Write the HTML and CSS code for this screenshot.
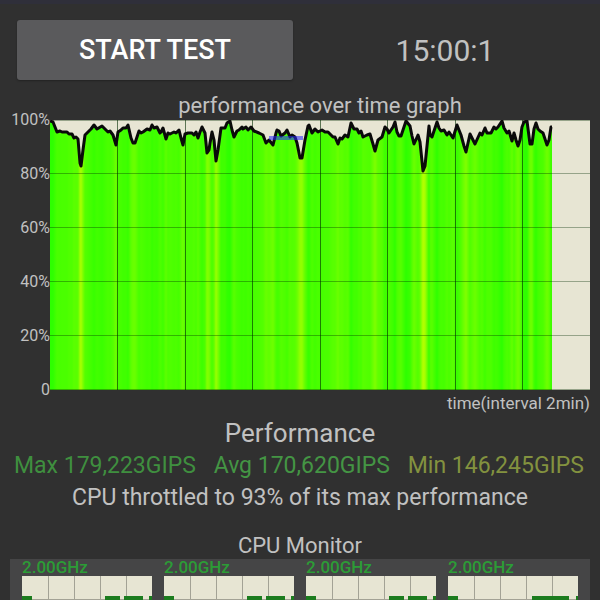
FILE: index.html
```html
<!DOCTYPE html>
<html lang="en">
<head>
    <meta charset="UTF-8">
    <meta name="viewport" content="width=device-width, initial-scale=1">
    <title>CPU Throttling Test</title>
    <link rel="stylesheet" href="styles.css">
</head>
<body>
    <div class="container">
        <div class="top-bar">
            <button type="button" class="start-button">START TEST</button>
            <div class="timer">15:00:1</div>
        </div>

        <div class="graph">
            <div class="graph-title">performance over time graph</div>
            <div class="graph-labels">
                <span>100%</span>
                <span>80%</span>
                <span>60%</span>
                <span>40%</span>
                <span>20%</span>
                <span>0</span>
            </div>
            <svg class="graph-plot" id="performance-graph" viewBox="0 0 540 270" role="img" aria-label="performance over time graph">
                <defs>
                    <linearGradient id="load-colors" gradientUnits="userSpaceOnUse" x1="0" y1="0" x2="502" y2="0"></linearGradient>
                </defs>
                <polygon id="performance-area" fill="url(#load-colors)" />
                <path class="grid-row" d="M0 .5H540M0 53.5H540M0 107.5H540M0 161.5H540M0 215.5H540M0 269.5H540" />
                <path class="grid-column" d="M67.5 0V270M135.5 0V270M202.5 0V270M270.5 0V270M337.5 0V270M405.5 0V270M472.5 0V270" />
                <polyline id="performance-line" class="performance-line" />
                <rect class="marker" x="219" y="16" width="34" height="4" />
            </svg>
            <div class="graph-time">time(interval 2min)</div>
        </div>

        <h2 class="section-title">Performance</h2>
        <div class="stats">
            <span class="stat-max">Max 179,223GIPS</span>
            <span class="stat-avg">Avg 170,620GIPS</span>
            <span class="stat-min">Min 146,245GIPS</span>
        </div>
        <p class="summary">CPU throttled to 93% of its max performance</p>

        <h3 class="monitor-title">CPU Monitor</h3>
        <div class="monitor">
            <div class="core">
                <div class="core-speed">2.00GHz</div>
                <svg class="core-plot" viewBox="0 0 130 24">
                    <path class="core-grid" d="M26.5 0V24M52.5 0V24M78.5 0V24M104.5 0V24M0 23.5H130" />
                    <path class="core-load" d="M0 20H10V24H0zM83 20H98V24H83zM102 20H121V24H102zM127 20H130V24H127z" />
                </svg>
            </div>
            <div class="core">
                <div class="core-speed">2.00GHz</div>
                <svg class="core-plot" viewBox="0 0 130 24">
                    <path class="core-grid" d="M26.5 0V24M52.5 0V24M78.5 0V24M104.5 0V24M0 23.5H130" />
                    <path class="core-load" d="M0 20H10V24H0zM83 20H98V24H83zM102 20H121V24H102zM127 20H130V24H127z" />
                </svg>
            </div>
            <div class="core">
                <div class="core-speed">2.00GHz</div>
                <svg class="core-plot" viewBox="0 0 130 24">
                    <path class="core-grid" d="M26.5 0V24M52.5 0V24M78.5 0V24M104.5 0V24M0 23.5H130" />
                    <path class="core-load" d="M0 20H10V24H0zM83 20H98V24H83zM102 20H121V24H102zM127 20H130V24H127z" />
                </svg>
            </div>
            <div class="core">
                <div class="core-speed">2.00GHz</div>
                <svg class="core-plot" viewBox="0 0 130 24">
                    <path class="core-grid" d="M26.5 0V24M52.5 0V24M78.5 0V24M104.5 0V24M0 23.5H130" />
                    <path class="core-load" d="M0 20H10V24H0zM84 20H121V24H84zM128 20H130V24H128z" />
                </svg>
            </div>
        </div>
    </div>
    <script src="graph.js"></script>
</body>
</html>
```
FILE: styles.css
```css
body {
    font-family: Roboto, 'Liberation Sans', sans-serif;
    margin: 0;
    background-color: #303030;
    color: #c1c1c1;
    border-top: 4px solid #2f2f3a;
}
.container {
    padding: 16px 10px 0;
}
.top-bar {
    display: grid;
    grid-template-columns: 1fr 1fr;
    align-items: center;
}
.start-button {
    height: 60px;
    margin: 0 7px;
    border: none;
    border-radius: 3px;
    background-color: #5a5a5c;
    color: #fff;
    font-family: inherit;
    font-size: 27px;
    font-weight: 500;
    box-shadow: 0 1px 2px rgba(0, 0, 0, 0.3);
    cursor: pointer;
}
.timer {
    font-size: 30px;
    text-align: center;
}

/* performance graph */
.graph {
    display: grid;
    grid-template-columns: 40px 1fr;
    margin-top: 12px;
}
.graph-title {
    grid-column: 2;
    font-size: 22px;
    line-height: 28px;
    text-align: center;
}
.graph-labels {
    grid-column: 1;
    display: flex;
    flex-direction: column;
    justify-content: space-between;
    margin: -10px 0;
    font-size: 16px;
    line-height: 20px;
    text-align: right;
}
.graph-plot {
    display: block;
    width: 100%;
    background-color: #e7e5d3;
}
.graph-time {
    grid-column: 2;
    font-size: 17px;
    line-height: 26px;
    text-align: right;
}
.grid-row {
    stroke: rgba(0, 40, 0, 0.35);
}
.grid-column {
    stroke: rgba(0, 40, 0, 0.6);
}
.marker {
    fill: rgba(40, 40, 255, 0.55);
}
.performance-line {
    fill: none;
    stroke: #0a0a0a;
    stroke-width: 3;
    stroke-linejoin: round;
}

/* results */
.section-title {
    margin: 0;
    font-size: 26px;
    font-weight: 400;
    line-height: 34px;
    text-align: center;
}
.stats {
    display: flex;
    justify-content: space-between;
    padding: 0 6px 0 4px;
    font-size: 23px;
    line-height: 32px;
}
.stat-max {
    color: #3f8f3f;
}
.stat-avg {
    color: #449544;
}
.stat-min {
    color: #83923f;
}
.summary {
    margin: 0;
    font-size: 23px;
    line-height: 32px;
    text-align: center;
}

/* cpu monitor */
.monitor-title {
    margin: 18px 0 0;
    font-size: 22px;
    font-weight: 400;
    line-height: 27px;
    text-align: center;
}
.monitor {
    display: grid;
    grid-template-columns: repeat(4, 1fr);
    gap: 12px;
    padding: 0 12px;
    background-color: #454546;
}
.core-speed {
    color: #2c9c36;
    font-size: 17px;
    font-weight: 500;
    line-height: 17px;
}
.core-plot {
    display: block;
    width: 100%;
    background-color: #e7e5d3;
}
.core-grid {
    stroke: #a3a295;
}
.core-load {
    fill: #1c7c1e;
}
```
FILE: graph.js
```js
// [time, drop from 100%] in graph units
const samples = [
    [0, 1], [3, 2], [5, 7], [7, 12], [10, 11], [12, 12], [17, 12], [19, 14], [22, 14], [24, 18], [26, 17], [28, 19],
    [30, 43], [31, 46], [33, 30], [35, 15], [38, 12], [41, 9], [44, 5], [47, 9], [52, 6], [56, 10], [58, 12], [60, 11],
    [63, 15], [66, 25], [68, 12], [71, 10], [73, 8], [76, 8], [78, 5], [81, 18], [83, 23], [85, 23], [87, 17], [89, 11],
    [91, 13], [93, 12], [97, 9], [100, 10], [102, 5], [104, 8], [107, 7], [110, 13], [111, 12], [113, 8], [116, 19],
    [118, 13], [120, 14], [124, 12], [126, 13], [129, 10], [131, 18], [133, 25], [135, 14], [138, 13], [142, 13],
    [144, 15], [146, 12], [148, 18], [150, 12], [152, 7], [155, 13], [157, 33], [159, 30], [160, 23], [162, 12],
    [164, 20], [166, 41], [168, 30], [171, 8], [175, 8], [177, 3], [180, 1], [182, 10], [184, 17], [187, 11], [189, 10],
    [192, 7], [193, 9], [196, 7], [198, 10], [201, 7], [204, 11], [209, 13], [213, 15], [216, 23], [219, 20], [223, 25],
    [226, 13], [227, 10], [229, 11], [231, 16], [235, 13], [237, 10], [240, 17], [242, 15], [245, 17], [247, 23],
    [250, 38], [252, 38], [255, 20], [258, 6], [259, 5], [262, 13], [265, 9], [268, 12], [272, 10], [275, 12],
    [278, 12], [283, 17], [285, 17], [288, 24], [290, 18], [292, 19], [295, 15], [298, 17], [301, 3], [304, 9],
    [307, 9], [309, 13], [311, 11], [313, 17], [317, 15], [320, 14], [323, 24], [325, 31], [328, 20], [332, 17],
    [335, 7], [337, 9], [339, 13], [343, 7], [345, 2], [347, 12], [349, 16], [351, 16], [354, 7], [356, 1], [360, 6],
    [362, 16], [364, 24], [368, 15], [370, 22], [373, 51], [375, 46], [379, 6], [380, 15], [382, 17], [387, 2],
    [389, 8], [391, 11], [394, 10], [397, 15], [399, 12], [403, 18], [407, 5], [411, 15], [414, 26], [416, 32],
    [420, 14], [425, 24], [430, 13], [432, 15], [435, 8], [437, 13], [441, 13], [444, 7], [446, 9], [448, 7], [452, 1],
    [454, 8], [457, 13], [459, 11], [462, 21], [464, 13], [466, 20], [468, 26], [470, 20], [472, 7], [474, 2],
    [477, 1], [480, 24], [482, 24], [484, 9], [486, 3], [488, 9], [490, 11], [493, 13], [497, 25], [499, 20], [501, 7],
    [502, 7]
];

const width = 502;
const line = samples.map(point => point.join(',')).join(' ');

document.getElementById('performance-line').setAttribute('points', line);
document.getElementById('performance-area').setAttribute('points', `${line} ${width},270 0,270`);

// Slower samples shift the green towards yellow
const gradient = document.getElementById('load-colors');
samples.forEach(function([time, drop]) {
    const stop = document.createElementNS('http://www.w3.org/2000/svg', 'stop');
    const red = Math.round(42 + drop * 2.7);
    stop.setAttribute('offset', time / width);
    stop.setAttribute('stop-color', `rgb(${red}, 255, 0)`);
    gradient.appendChild(stop);
});
```
